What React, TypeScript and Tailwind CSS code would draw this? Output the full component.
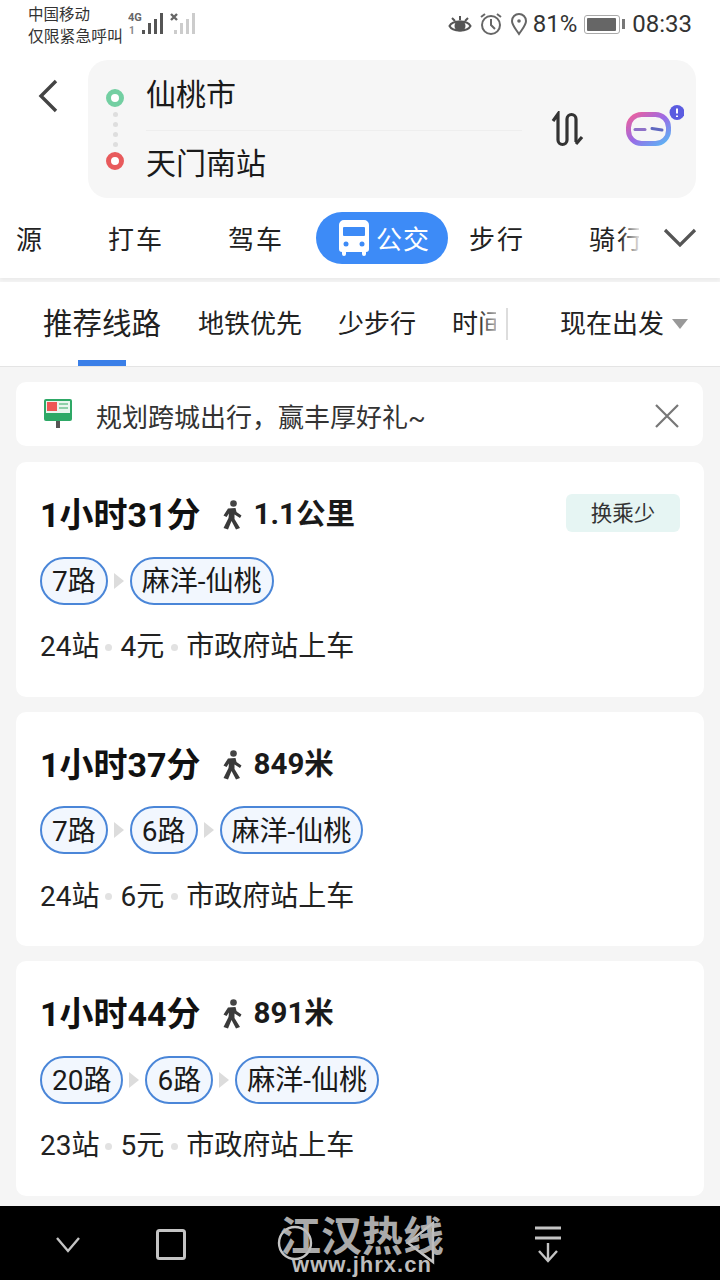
import React from "react";

const font = { fontFamily: 'Roboto, "Noto Sans CJK SC", sans-serif' };

function Walker() {
  return (
    <svg width="22" height="30" viewBox="0 0 22 30" className="shrink-0">
      <circle cx="12.500" cy="3.500" r="3.300" fill="#444" />
      <path d="M7 8.500 L14.500 8 L15.500 12 L20.500 15.500 L19 18 L13.500 14.500 L13.500 19 L19 28 L15 29.500 L10.500 21 L7 29.500 L2.500 28 L7.500 18 L8 13.500 L5.500 17 L2.500 15.500 Z" fill="#3a3a3a" />
    </svg>
  );
}

function Chip({ t }: { t: string }) {
  return (
    <span className="h-[48px] px-[10px] pt-[3px] flex items-center rounded-full border-2 border-[#4a86d8] bg-[#f2f7fe] text-[28px] text-[#1a1a1a] whitespace-nowrap">
      {t}
    </span>
  );
}

function Arrow() {
  return <span className="mx-[6px] w-0 h-0 border-y-[8px] border-y-transparent border-l-[10px] border-l-[#dcdcdc]" />;
}

function Card({ time, walk, chips, stops, price, badge }: { time: string; walk: string; chips: string[]; stops: string; price: string; badge?: boolean }) {
  return (
    <div className="mx-[16px] h-[234.5px] shrink-0 bg-white rounded-[10px] px-[24px] pt-[31px]">
      <div className="flex items-center h-[44px]">
        <span className="text-[34px] font-bold text-[#111] leading-none">{time}</span>
        <span className="ml-[20px]"><Walker /></span>
        <span className="ml-[11px] text-[29.5px] font-bold text-[#1a1a1a] leading-none">{walk}</span>
        {badge && (
          <span className="ml-auto mb-[4px] pt-[3px] w-[114px] h-[38px] rounded-[6px] bg-[#e6f5f3] text-[21.500px] text-[#333] flex items-center justify-center">换乘少</span>
        )}
      </div>
      <div className="flex items-center mt-[20px] h-[47px]">
        {chips.map((c, i) => (
          <React.Fragment key={c}>
            {i > 0 && <Arrow />}
            <Chip t={c} />
          </React.Fragment>
        ))}
      </div>
      <div className="flex items-center mt-[21px] text-[28px] text-[#222] leading-[44px]">
        <span>{stops}</span>
        <span className="ml-[6px] mr-[8px] w-[7px] h-[7px] rounded-full bg-[#e2e2e2]" />
        <span>{price}</span>
        <span className="ml-[7px] mr-[8px] w-[7px] h-[7px] rounded-full bg-[#e2e2e2]" />
        <span>市政府站上车</span>
      </div>
    </div>
  );
}

export default function App() {
  return (
    <div style={font} className="relative w-[720px] h-[1280px] overflow-hidden bg-[#f5f5f5] flex flex-col">
      <div className="bg-white h-[278px] shrink-0 flex flex-col shadow-[0_2px_4px_rgba(0,0,0,0.05)]">
        {/* status bar */}
        <div className="h-[60px] shrink-0 flex items-start pl-[28px] pr-[28px]">
          <div className="pt-[5px] leading-[21px] text-[#333] whitespace-nowrap">
            <div className="text-[15.5px]">中国移动</div>
            <div className="text-[15.8px]">仅限紧急呼叫</div>
          </div>
          <svg width="70" height="26" viewBox="0 0 70 26" className="ml-[5px] mt-[11px]">
            <text x="0" y="10" fontSize="11" fontWeight="700" fill="#666">4G</text>
            <text x="1" y="23" fontSize="10" fontWeight="700" fill="#888">1</text>
            <rect x="14" y="19" width="3" height="4" fill="#555" />
            <rect x="20" y="12" width="3" height="11" fill="#555" />
            <rect x="26" y="8" width="3" height="15" fill="#555" />
            <rect x="32" y="2" width="3" height="21" fill="#555" />
            <path d="M43 3l6 6M49 3l-6 6" stroke="#666" strokeWidth="2.400" />
            <rect x="46" y="19" width="3" height="4" fill="#ccc" />
            <rect x="52" y="12" width="3" height="11" fill="#ccc" />
            <rect x="58" y="8" width="3" height="15" fill="#ccc" />
            <rect x="64" y="2" width="3" height="21" fill="#ccc" />
          </svg>
          <div className="ml-auto flex items-center h-[48px] text-[#333]">
            <svg width="24" height="24" viewBox="0 0 24 24" fill="none" stroke="#555" strokeWidth="2">
              <path d="M1.500 14c3-6 18-6 21 0-3 6-18 6-21 0z" />
              <circle cx="12" cy="14" r="4.500" fill="#555" />
              <path d="M4 6l3 3M12 4v4M20 6l-3 3" />
            </svg>
            <svg width="24" height="24" viewBox="0 0 24 24" fill="none" stroke="#666" strokeWidth="2" className="ml-[7px]">
              <circle cx="12" cy="13" r="9" />
              <path d="M12 7v6l4 4M2 5l4-3M22 5l-4-3" />
            </svg>
            <svg width="18" height="24" viewBox="0 0 18 24" fill="none" stroke="#666" strokeWidth="2" className="ml-[7px]">
              <path d="M9 22C5 16 2 13 2 9a7 7 0 0 1 14 0c0 4-3 7-7 13z" />
              <circle cx="9" cy="9" r="1.800" fill="#666" stroke="none" />
            </svg>
            <span className="ml-[5px] text-[24px]">81%</span>
            <span className="ml-[7px] w-[36px] h-[19px] rounded-[3px] border border-[#aaa] p-[2px] flex">
              <span className="w-[29px] bg-[#666] rounded-[1px]" />
            </span>
            <span className="ml-[2px] w-[3px] h-[10px] bg-[#777]" />
            <span className="ml-[7px] text-[24px]">08:33</span>
          </div>
        </div>
        {/* route box */}
        <div className="flex items-start h-[138px] shrink-0">
          <svg width="22" height="34" viewBox="0 0 22 34" fill="none" stroke="#444" strokeWidth="3.400" className="ml-[37px] mt-[19px]">
            <path d="M19 2 L4 17 L19 32" />
          </svg>
          <div className="ml-[29px] w-[608px] h-[138px] rounded-[20px] bg-[#f6f6f6] flex items-center">
            <div className="ml-[18px] w-[18px] flex flex-col items-center">
              <span className="w-[18px] h-[18px] rounded-full border-[5px] border-[#73cfa2] bg-white" />
              <span className="mt-[5px] w-[5px] h-[5px] rounded-full bg-[#dedede]" />
              <span className="mt-[5px] w-[5px] h-[5px] rounded-full bg-[#dedede]" />
              <span className="mt-[5px] w-[5px] h-[5px] rounded-full bg-[#dedede]" />
              <span className="mt-[5px] mb-[5px] w-[5px] h-[5px] rounded-full bg-[#dedede]" />
              <span className="w-[18px] h-[18px] rounded-full border-[5px] border-[#e85a5c] bg-white" />
            </div>
            <div className="ml-[22px] w-[376px] text-[30px] text-[#1a1a1a]">
              <div className="h-[70px] flex items-center border-b border-[#eeeeee] pb-[3px]">仙桃市</div>
              <div className="h-[66px] flex items-center pb-[2px]">天门南站</div>
            </div>
            <svg width="36" height="36" viewBox="0 0 36 36" fill="none" stroke="#333" strokeWidth="3.200" className="ml-[28px]">
              <path d="M3 10l5-7v26a4.500 4.500 0 0 0 9 0V8a4.500 4.500 0 0 1 9 0v23" />
              <path d="M26 33l6-7" />
            </svg>
            <svg width="60" height="44" viewBox="0 0 60 44" fill="none" className="ml-[38px] mb-[4px]">
              <defs>
                <linearGradient id="face" x1="0" y1="0" x2="1" y2="1">
                  <stop offset="0" stopColor="#f0609a" />
                  <stop offset="0.5" stopColor="#9a6be6" />
                  <stop offset="1" stopColor="#58b8f5" />
                </linearGradient>
              </defs>
              <rect x="4.500" y="9.500" width="40" height="29" rx="13" stroke="url(#face)" strokeWidth="5" />
              <path d="M11 24.500h10" stroke="#8f72c8" strokeWidth="3" strokeLinecap="round" />
              <path d="M28 23.500l10 1.500" stroke="#5f68c0" strokeWidth="3" strokeLinecap="round" />
              <circle cx="53" cy="7.500" r="7.500" fill="#5b5ce0" />
              <path d="M53 3.500v5M53 10.500v1.500" stroke="#fff" strokeWidth="2" />
            </svg>
          </div>
        </div>
        {/* mode tabs */}
        <div className="relative flex items-center h-[52px] mt-[14px] text-[26px] text-[#222] whitespace-nowrap">
          <span className="absolute left-[16px] top-[9px]">源</span>
          <span className="absolute left-[108px] top-[9px] tracking-[2px]">打车</span>
          <span className="absolute left-[228px] top-[9px] tracking-[2px]">驾车</span>
          <span className="absolute left-[316px] w-[132px] h-[52px] rounded-full bg-[#3d8bf7] text-white flex items-center pl-[22px]">
            <svg width="32" height="36" viewBox="0 0 32 36" fill="white">
              <path d="M6 0h20a5 5 0 0 1 5 5v24a3 3 0 0 1-3 3v2a2 2 0 0 1-4 0v-2H8v2a2 2 0 0 1-4 0v-2a3 3 0 0 1-3-3V5a5 5 0 0 1 5-5z" />
              <rect x="5" y="7" width="22" height="9" rx="1" fill="#3d8bf7" />
              <circle cx="8" cy="24" r="2.500" fill="#3d8bf7" />
              <circle cx="24" cy="24" r="2.500" fill="#3d8bf7" />
            </svg>
            <span className="ml-[6px] mt-[4px] tracking-[1px]">公交</span>
          </span>
          <span className="absolute left-[469px] top-[9px] tracking-[2px]">步行</span>
          <span className="absolute left-[589px] top-[9px] w-[50px] overflow-hidden tracking-[2px]">骑行</span>
          <span className="absolute left-[620px] w-[22px] h-[40px] bg-gradient-to-r from-transparent to-white" />
          <svg width="34" height="22" viewBox="0 0 34 22" fill="none" stroke="#555" strokeWidth="3.200" className="absolute left-[663px] top-[15px]">
            <path d="M2 3l15 15L32 3" />
          </svg>
        </div>
      </div>
      {/* route tabs */}
      <div className="mt-[4px] h-[85px] shrink-0 bg-white border-b border-[#e4e4e4] relative flex items-center whitespace-nowrap text-[#222]">
        <span className="ml-[43px] text-[29.5px] text-[#222]">推荐线路</span>
        <span className="absolute left-[78px] bottom-0 w-[48px] h-[6px] bg-[#3a7fe8]" />
        <span className="ml-[37px] text-[26px]">地铁优先</span>
        <span className="ml-[36px] text-[26px]">少步行</span>
        <span className="ml-[36px] text-[26px] w-[44px] overflow-hidden">时间</span>
        <span className="absolute left-[478px] w-[28px] h-[40px] bg-gradient-to-r from-transparent to-white" />
        <span className="absolute left-[506px] w-[2px] h-[32px] bg-[#ddd]" />
        <span className="absolute left-[560px] text-[26px]">现在出发</span>
        <span className="absolute left-[672px] top-[37px] w-0 h-0 border-x-[8px] border-x-transparent border-t-[10px] border-t-[#999]" />
      </div>
      {/* notice */}
      <div className="mt-[15px] mx-[16px] mr-[17px] h-[64px] shrink-0 rounded-[10px] bg-white flex items-center text-[26px] text-[#333]">
        <svg width="30" height="32" viewBox="0 0 30 32" className="ml-[27px] shrink-0">
          <rect x="1" y="1" width="28" height="22" rx="2" fill="#2ea866" />
          <rect x="3" y="3" width="24" height="12" fill="#eaf5ee" />
          <rect x="4" y="4" width="10" height="9" fill="#ee5555" />
          <rect x="16" y="5" width="9" height="2" fill="#8fcfa8" />
          <rect x="16" y="9" width="9" height="2" fill="#8fcfa8" />
          <rect x="13" y="23" width="4" height="7" fill="#555" />
        </svg>
        <span className="ml-[23px] pt-[8px]">规划跨城出行，赢丰厚好礼~</span>
        <svg width="26" height="26" viewBox="0 0 26 26" fill="none" stroke="#777" strokeWidth="2.200" className="ml-auto mr-[23px] mt-[4px]">
          <path d="M2 2l22 22M24 2L2 24" />
        </svg>
      </div>
      {/* cards */}
      <div className="mt-[16px] flex flex-col gap-[15px]">
        <Card time="1小时31分" walk="1.1公里" chips={["7路", "麻洋-仙桃"]} stops="24站" price="4元" badge />
        <Card time="1小时37分" walk="849米" chips={["7路", "6路", "麻洋-仙桃"]} stops="24站" price="6元" />
        <Card time="1小时44分" walk="891米" chips={["20路", "6路", "麻洋-仙桃"]} stops="23站" price="5元" />
      </div>
      {/* nav bar */}
      <div className="absolute left-0 right-0 bottom-0 h-[74px] bg-black">
        <svg width="720" height="74" viewBox="0 0 720 74" fill="none" stroke="#c4c4c4" strokeWidth="2.400">
          <path d="M57 32l11 13 11-13" />
          <rect x="157.500" y="24.500" width="27" height="28" rx="2" strokeWidth="3" />
          <circle cx="295" cy="37" r="16" />
          <path d="M433 17v39L408 37z" />
          <path d="M535 22h26M535 32h26" strokeWidth="3" />
          <path d="M548 37v17M539 45l9 10 9-10" />
        </svg>
      </div>
      {/* watermark */}
      <div className="absolute left-[277px] top-[1211px] w-[170px] flex flex-col items-center text-[#bdbdbd]">
        <div className="text-[41px] font-bold leading-[44px] whitespace-nowrap opacity-90" style={{ fontFamily: '"Noto Sans CJK SC", sans-serif' }}>江汉热线</div>
        <div className="text-[22px] font-bold leading-[20px] tracking-[1px] whitespace-nowrap" style={{ fontFamily: '"Liberation Sans", sans-serif' }}>www.jhrx.cn</div>
      </div>
    </div>
  );
}
